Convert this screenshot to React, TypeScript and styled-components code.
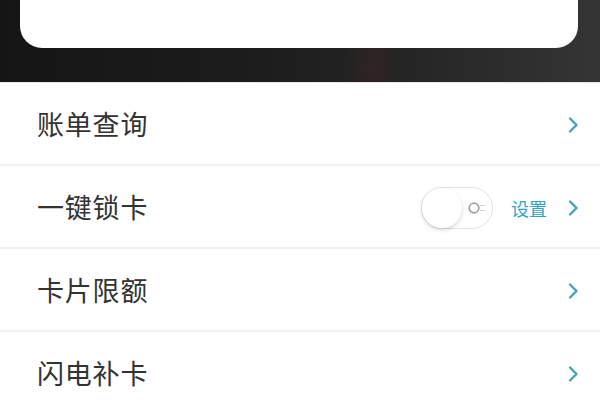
import styled, { createGlobalStyle } from "styled-components";

const GlobalStyle = createGlobalStyle`
  html, body {
    margin: 0;
    padding: 0;
    background: #ffffff;
    font-family: "Noto Sans CJK SC", "Noto Sans", sans-serif;
  }
  #root {
    width: 600px;
    height: 400px;
    overflow: hidden;
  }
`;

type RowItem = {
  title: string;
  toggle?: boolean;
};

const rows: RowItem[] = [
  { title: "账单查询" },
  { title: "一键锁卡", toggle: true },
  { title: "卡片限额" },
  { title: "闪电补卡" },
];

const Chevron = () => (
  <svg width="12" height="18" viewBox="0 0 12 18">
    <path
      d="M3 2.5 L9.5 9 L3 15.5"
      fill="none"
      stroke="#4a9fb9"
      strokeWidth="2.4"
      strokeLinecap="round"
      strokeLinejoin="round"
    />
  </svg>
);

const OffMark = () => (
  <svg width="22" height="16" viewBox="0 0 22 16">
    <circle cx="7" cy="8" r="4.8" fill="none" stroke="#a0a0a0" strokeWidth="1.7" />
    <path d="M13 5.5 H18 M13 10.5 H18" stroke="#d0d0d0" strokeWidth="1.2" />
    <path d="M2.5 2 L4.5 4 M2.5 14 L4.5 12" stroke="#dadada" strokeWidth="1" />
  </svg>
);

export default function App() {
  return (
    <>
      <GlobalStyle />
      <Page>
        <TopBand>
          <Card />
        </TopBand>
        <List>
          {rows.map((row) => (
            <Row key={row.title}>
              <Title>{row.title}</Title>
              <Right>
                {row.toggle && (
                  <>
                    <Switch>
                      <Knob />
                      <MarkWrap>
                        <OffMark />
                      </MarkWrap>
                    </Switch>
                    <SetLink>设置</SetLink>
                  </>
                )}
                <Chevron />
              </Right>
            </Row>
          ))}
        </List>
      </Page>
    </>
  );
}

const Page = styled.div`
  width: 600px;
  height: 400px;
  display: flex;
  flex-direction: column;
  background: #ffffff;
`;

const TopBand = styled.div`
  height: 82px;
  flex-shrink: 0;
  padding: 0 22px 0 20px;
  box-sizing: border-box;
  background:
    radial-gradient(ellipse 30px 50px at 372px 68px, rgba(90, 35, 35, 0.25), transparent),
    linear-gradient(90deg, #151515 0%, #1c1c1c 40%, #262626 70%, #353535 100%);
`;

const Card = styled.div`
  height: 48px;
  background: #ffffff;
  border-radius: 0 0 22px 22px;
`;

const List = styled.div`
  display: flex;
  flex-direction: column;
  border-top: 1px solid #e6e6e6;
`;

const Row = styled.div`
  height: 81px;
  flex-shrink: 0;
  display: flex;
  align-items: center;
  justify-content: space-between;
  padding: 0 21px 0 37px;
  border-bottom: 2px solid #f1f1f1;
`;

const Title = styled.span`
  font-size: 27px;
  color: #333333;
  letter-spacing: 0.8px;
`;

const Right = styled.div`
  display: flex;
  align-items: center;
  padding-top: 2px;
`;

const Switch = styled.div`
  position: relative;
  width: 72px;
  height: 42px;
  box-sizing: border-box;
  border: 1px solid #e3e3e3;
  border-radius: 21px;
  background: #ffffff;
  margin-right: 18px;
`;

const Knob = styled.div`
  position: absolute;
  left: 0;
  top: 0;
  width: 40px;
  height: 40px;
  border-radius: 50%;
  background: #ffffff;
  box-shadow: 0 2px 4px rgba(0, 0, 0, 0.16);
`;

const MarkWrap = styled.div`
  position: absolute;
  left: 45px;
  top: 12px;
  display: flex;
`;

const SetLink = styled.span`
  font-size: 18px;
  color: #2fa4c8;
  margin-right: 20px;
`;
